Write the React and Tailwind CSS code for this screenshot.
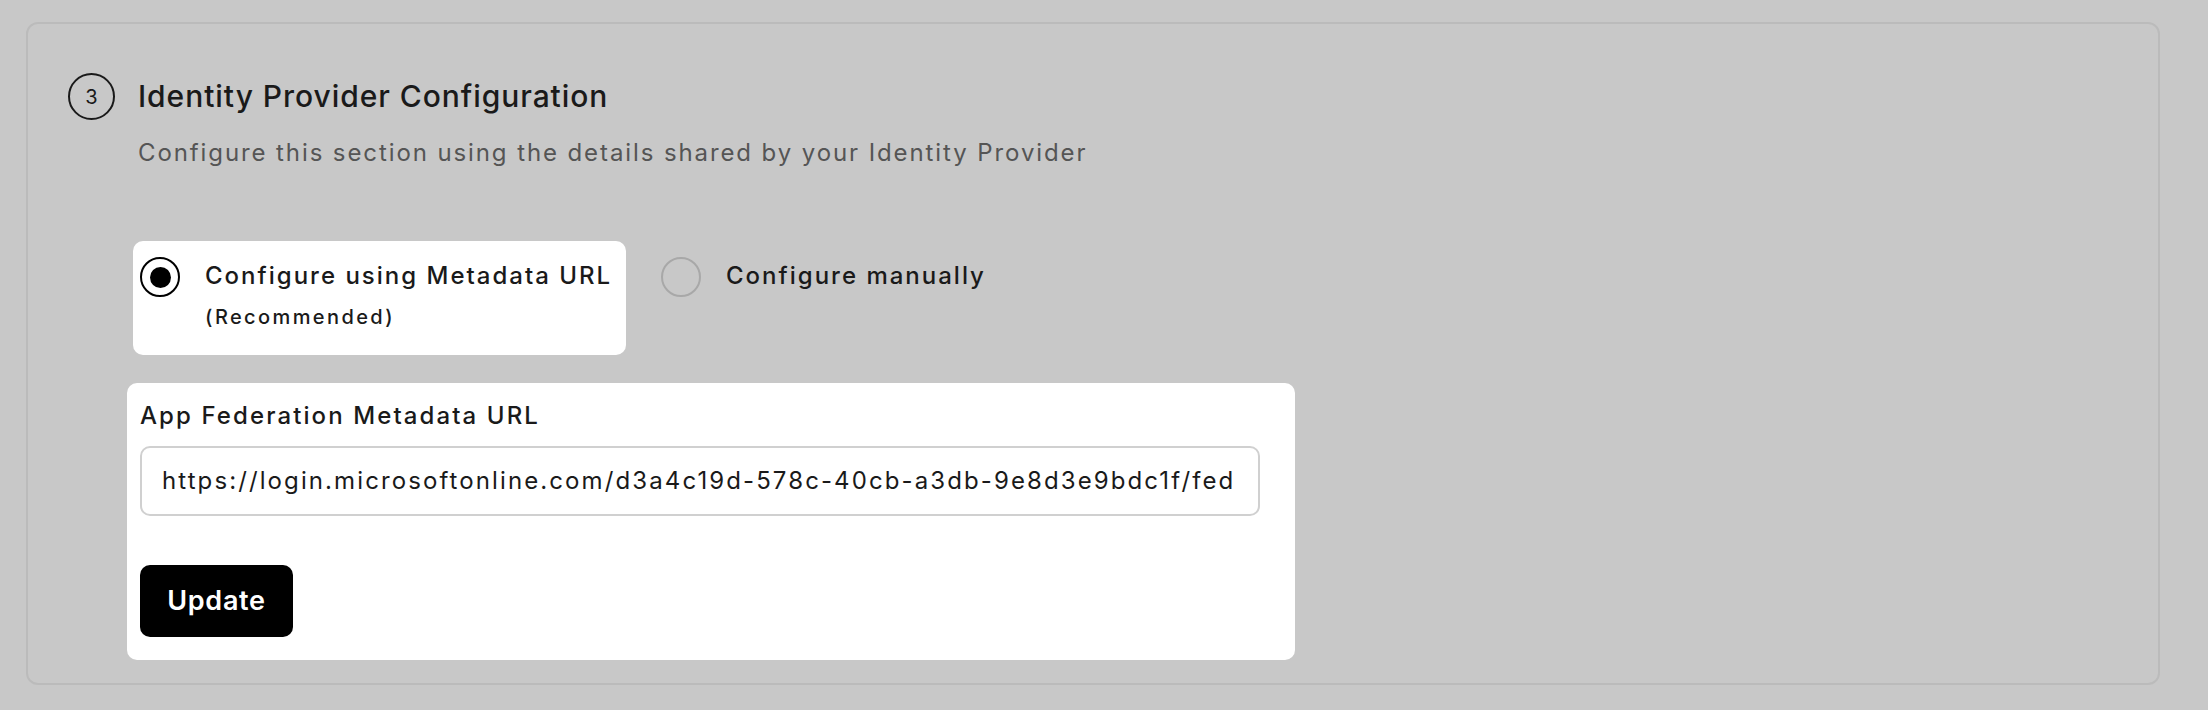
import React from "react";

export default function App() {
  return (
    <div className="w-[2208px] h-[710px] bg-[#c8c8c8] pt-[22px] pl-[26px] overflow-hidden font-['Inter',sans-serif] text-[#1a1a1a]">
      <div className="w-[2134px] h-[663px] rounded-[12px] border-2 border-[#bbbbbb] flex flex-col items-start">
        <div className="mt-[49px] ml-[40px] flex items-center gap-[23px]">
          <div className="w-[47px] h-[47px] rounded-full border-2 border-[#1a1a1a] flex items-center justify-center text-[20px] leading-none text-[#1a1a1a]">
            3
          </div>
          <div className="text-[30px] leading-[47px] font-medium tracking-[0.95px]">Identity Provider Configuration</div>
        </div>
        <div className="ml-[110px] mt-[17px] text-[24px] leading-[32px] text-[#555555] tracking-[1.9px]">
          Configure this section using the details shared by your Identity Provider
        </div>

        <div className="ml-[105px] mt-[72px] flex gap-[28px]">
          <div className="w-[493px] h-[114px] bg-white rounded-[10px] pl-[7px] pt-[16px] flex gap-[25px]">
            <div className="w-[40px] h-[40px] rounded-full border-[2.5px] border-black flex items-center justify-center shrink-0">
              <div className="w-[21px] h-[21px] rounded-full bg-black" />
            </div>
            <div className="flex flex-col pt-[3px]">
              <div className="text-[24px] leading-[32px] font-medium tracking-[2px]">Configure using Metadata URL</div>
              <div className="mt-[11px] text-[20px] leading-[28px] font-medium tracking-[2.4px]">(Recommended)</div>
            </div>
          </div>
          <div className="pl-[7px] pt-[16px] flex gap-[25px]">
            <div className="w-[40px] h-[40px] rounded-full border-2 border-[#a8a8a8] shrink-0" />
            <div className="pt-[3px] text-[24px] leading-[32px] font-medium tracking-[2px]">Configure manually</div>
          </div>
        </div>

        <div className="ml-[99px] mt-[28px] w-[1168px] h-[277px] bg-white rounded-[10px] pl-[13px] pt-[17px] flex flex-col items-start">
          <div className="text-[24px] leading-[32px] font-medium tracking-[2.1px]">App Federation Metadata URL</div>
          <div className="mt-[14px] w-[1120px] h-[70px] rounded-[10px] border-2 border-[#d0d0d0] pl-[20px] pr-[20px] flex items-center overflow-hidden">
            <div className="whitespace-nowrap overflow-hidden text-[24px] leading-[32px] text-[#1a1a1a] tracking-[2.1px]">
              https://login.microsoftonline.com/d3a4c19d-578c-40cb-a3db-9e8d3e9bdc1f/fed
            </div>
          </div>
          <button className="mt-[49px] w-[153px] h-[72px] bg-black rounded-[10px] text-white text-[27px] font-semibold tracking-[0.7px] flex items-center justify-center">
            Update
          </button>
        </div>
      </div>
    </div>
  );
}
